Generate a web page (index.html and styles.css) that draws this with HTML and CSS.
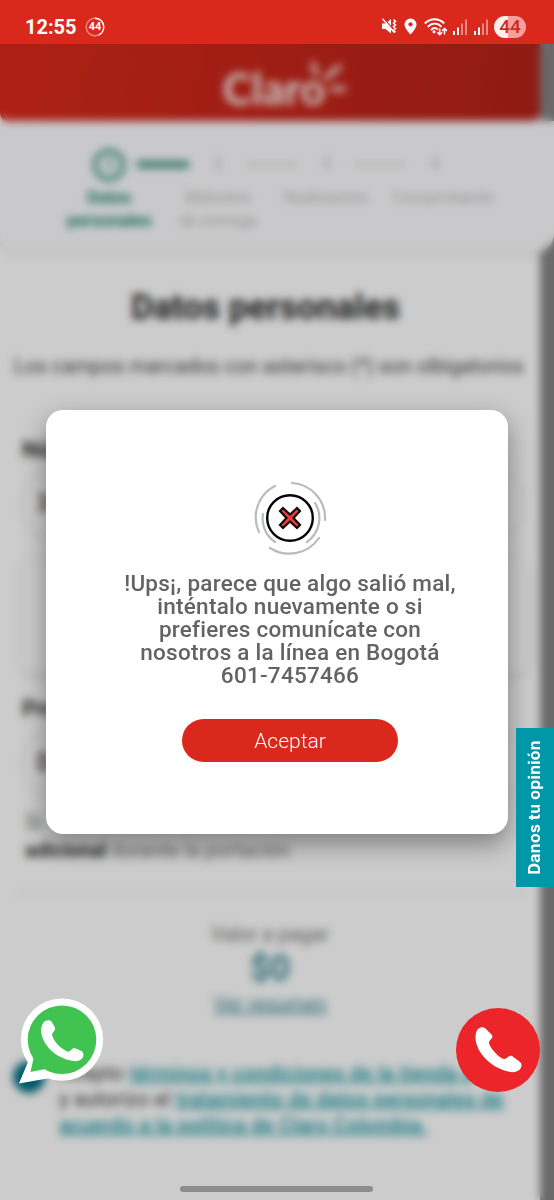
FILE: index.html
```html
<!DOCTYPE html>
<html lang="es">
<head>
<meta charset="utf-8">
<title>Claro - Datos personales</title>
<link rel="stylesheet" href="styles.css">
</head>
<body>
<div class="phone">
  <div class="statusbar">
    <span class="clock">12:55</span>
    <span class="ring">
      <svg width="20" height="20" viewBox="0 0 20 20" fill="none" stroke="#fff" stroke-width="1.4"><circle cx="10" cy="10" r="8.8" opacity=".45"/><path d="M10 1.2a8.8 8.8 0 0 1 3.8 16.7"/></svg>
      <b>44</b>
    </span>
    <div class="status-icons">
      <svg width="17" height="17" viewBox="0 0 17 17"><path d="M1 5.5h3.500L10 1v14.500l-5.500-4.500H1z" fill="#fff"/><path d="M2.800.5l11 13" stroke="#da291c" stroke-width="1.300"/><path d="M1.500.8l12 14M12.500 1.500l2 1.800-2 1.800 2 1.800-2 1.800 2 1.800-2 1.800 2 1.800" stroke="#fff" stroke-width="1.500" fill="none"/></svg>
      <svg class="pin" width="13" height="17" viewBox="0 0 13 17"><path d="M6.500.5a6 6 0 0 0-6 6c0 4.200 6 10 6 10s6-5.800 6-10a6 6 0 0 0-6-6z" fill="#fff"/><circle cx="6.500" cy="6.300" r="2.100" fill="#da291c"/></svg>
      <svg class="wifi" width="24" height="18" viewBox="0 0 24 18" fill="none" stroke="#fff" stroke-width="1.900"><path d="M.8 5.500c5.500-5.700 14.200-5.700 19.400 0M3.800 8.800c4-4.200 10-4.200 13.700 0M7 12c2.200-2.300 5-2.300 7-.4"/><circle cx="10" cy="13.800" r="1.500" fill="#fff" stroke="none"/><path d="M15.700 10.500v6M13.300 14.200l2.400 2.400 2.400-2.400M20.500 16.500v-6M18.100 12.900l2.400-2.400 2.400 2.400" stroke-width="1.500"/></svg>
      <svg class="bars" width="15" height="16" viewBox="0 0 15 16" fill="#fff"><path d="M0 12h2v4H0zM4 8.500h2V16H4z"/><path d="M8 4.500h2V16H8zM12 .5h2V16h-2z" opacity=".45"/></svg>
      <svg class="bars" width="15" height="16" viewBox="0 0 15 16" fill="#fff"><path d="M0 12h2v4H0zM4 8.500h2V16H4z"/><path d="M8 4.500h2V16H8zM12 .5h2V16h-2z" opacity=".45"/></svg>
      <span class="battery">44</span>
    </div>
  </div>

  <div class="viewport">
    <div class="page">
      <header class="brand">
        <span class="brand-name">Claro</span>
        <svg class="rays" width="40" height="42" viewBox="0 0 40 42" stroke="#fff" stroke-width="4.500" stroke-linecap="round"><path d="M4 4l3 10M17 18L30 7M23 29h12"/></svg>
      </header>
      <div class="stepper">
        <div class="step active"><span class="dot">1</span><p>Datos<br>personales</p></div>
        <div class="step"><span class="dot">2</span><p>Métodos<br>de entrega</p></div>
        <div class="step"><span class="dot">3</span><p>Realización</p></div>
        <div class="step last"><span class="dot">4</span><p>Comprobante</p></div>
      </div>
      <main class="content">
        <h1>Datos personales</h1>
        <p class="hint">Los campos marcados con asterisco (*) son olbigatorios</p>
        <div class="form">
          <label>Número</label>
          <div class="field">3</div>
          <div class="card"></div>
          <label>Producto</label>
          <div class="field">D</div>
          <p class="note">Si<br><b>adicional</b> durante la portación</p>
        </div>
        <div class="summary">
          <p class="caption">Valor a pagar</p>
          <p class="price">$0</p>
          <a class="detail">Ver resumen</a>
        </div>
        <div class="terms">
          <span class="check"></span>
          <p>Acepto <a>términos y condiciones de la tienda v</a><br>y autorizo el <a>tratamiento de datos personales de</a><br><a>acuerdo a la política de Claro Colombia.</a></p>
        </div>
      </main>
    </div>
    <div class="scrim"></div>

    <div class="dialog">
      <svg width="76" height="76" viewBox="-38 -38 76 76" fill="none">
        <g stroke="#b7babf" stroke-width="2.200" stroke-linecap="round"><path d="M2-35A35 35 0 0 1 35 2M-15-32A35 35 0 0 0-31 14M-20 30A36 36 0 0 0 29 20M25-15A29 29 0 0 1 17 24M-27-4A28 28 0 0 0-15 24"/></g>
        <circle r="22.800" stroke="#050505" stroke-width="2.400" fill="#fff"/>
        <path d="M-7-10L0-3.500 7-10 10-7 3.500 0 10 7 7 10 0 3.500-7 10-10 7-3.500 0-10-7z" fill="#e93d39" stroke="#160b0b" stroke-width="2.200"/>
      </svg>
      <p class="message">!Ups¡, parece que algo salió mal,<br>inténtalo nuevamente o si<br>prefieres comunícate con<br>nosotros a la línea en Bogotá<br>601-7457466</p>
      <button class="accept">Aceptar</button>
    </div>

    <div class="feedback"><span>Danos tu opinión</span></div>
    <svg class="whatsapp" width="88" height="88" viewBox="0 0 88 88"><path d="M1 86.500L12 60 32 81z" fill="#fff"/><circle cx="44" cy="42.600" r="41.200" fill="#fff"/><path d="M12.500 75L16.500 57 30 71.500z" fill="#40c351"/><circle cx="44" cy="42.700" r="34.300" fill="#40c351"/><path d="M25.500 25.500c2-2.500 6-3 8-1l3.500 6c1 3-3 5-3 7.500 2 7 9 14 15.500 16.500 3 1 4-3.500 7-3.500l7 3c2.500 2 2.500 4.500 1 7-3 3.500-8 4-14 2C35 59 24 46 23 34c0-3 1-6.500 2.500-8.500z" fill="#fff"/></svg>
    <div class="call"><svg width="50" height="50" viewBox="0 0 50 50"><path d="M5 4c3-2.500 6-2 8 0l6 6c2 3-3 5-3 7.500 0 4.500 10 15.500 15 16.500 3 0 5-4.500 8-3l7.500 5.500c2.500 2 2.500 4.500 1 7-3 4-8.500 4.500-14.500 2.500C17 41.500 3 27 2.500 13c0-4 .5-7 2.500-9z" fill="#fff"/></svg></div>
    <div class="home-bar"></div>
  </div>
</div>
</body>
</html>
```
FILE: styles.css
```css
* { box-sizing: border-box; }
body { margin: 0; font-family: Roboto, "Liberation Sans", sans-serif; }
p, h1 { margin: 0; }
.phone { width: 554px; height: 1200px; overflow: hidden; display: flex; flex-direction: column; }

.statusbar { height: 44px; flex: none; background: #da291c; color: #fff; display: flex; align-items: center; padding: 9px 28px 0 25px; }
.clock { font-size: 20px; font-weight: 700; line-height: 24px; width: 60px; }
.ring { position: relative; width: 20px; height: 20px; }
.ring svg { display: block; }
.ring b { position: absolute; inset: 0; font-size: 11px; line-height: 20px; text-align: center; }
.status-icons { margin-left: auto; display: flex; align-items: center; }
.pin { margin-left: 6px; }
.wifi { margin-left: 7px; }
.bars { margin-left: 5px; }
.bars + .bars { margin-left: 6px; }
.battery { width: 32px; height: 22px; margin-left: 5px; border-radius: 11px; background: linear-gradient(90deg, #fff0ee 44%, #f5a09a 44%); color: #ca2b20; font-size: 19px; font-weight: 500; line-height: 22px; text-align: center; }

.viewport { position: relative; flex: 1; overflow: hidden; }
.page { height: 1156px; padding-right: 14px; background: linear-gradient(90deg, #fff 540px, #858585 540px); }
.scrim { position: absolute; inset: 0; background: rgba(0, 0, 0, .2); backdrop-filter: blur(4px); }

.brand { height: 77px; border-radius: 0 0 8px 8px; background: linear-gradient(100deg, #da291c, #b32218); position: relative; padding: 21px 0 0 223px; }
.brand-name { color: #fff; font-family: Lato, sans-serif; font-weight: 700; font-size: 43px; line-height: 48px; letter-spacing: .3px; }
.rays { position: absolute; left: 309px; top: 16px; }

.stepper { height: 132px; margin-right: -14px; background: #fcfcfe; border-radius: 0 0 20px 20px; box-shadow: 0 2px 5px rgba(0, 0, 0, .13); display: grid; grid-template-columns: repeat(4, 108.500px); padding: 28px 0 0 55px; }
.step { position: relative; text-align: center; font-size: 16.700px; line-height: 23px; color: #bcbcbc; white-space: nowrap; }
.step p { display: flow-root; margin: 5px -8px 0; }
.step.last p { margin: 5px -16px 0 0; }
.dot { display: block; width: 32px; height: 32px; margin: 0 auto; font-size: 16px; line-height: 30px; }
.step:not(:last-child)::after { content: ""; position: absolute; left: 82px; top: 14px; width: 52px; height: 3px; background: #d8d8d5; }
.step.active { color: #148564; font-weight: 700; font-size: 17px; }
.step.active .dot { border: 4px solid #288c73; border-radius: 50%; line-height: 24px; font-size: 15px; }
.step.active::after { height: 7px; top: 12px; background: #429580; }

.content { padding: 33px 14px 0; color: #333; }
h1 { font-size: 34.500px; line-height: 42px; text-align: center; padding-right: 9px; color: #252525; }
.hint { font-size: 20px; line-height: 28px; margin-top: 24px; white-space: nowrap; color: #444; letter-spacing: .1px; }
.form { margin-top: 56px; padding: 0 2px 0 8px; border-bottom: 1px solid #ddd; height: 458px; }
.form label { display: block; font-size: 22px; font-weight: 700; line-height: 28px; }
.field { height: 62px; margin-top: 10px; padding-left: 14px; border: 1.500px solid #d5d5d5; border-radius: 24px; font-size: 23px; font-weight: 500; line-height: 58px; }
.card { height: 116px; margin: 22px -6px 21px -3px; border-radius: 16px; border: 1px solid #eee; box-shadow: 0 2px 6px rgba(0, 0, 0, .13); }
.note { margin-top: 13px; padding-left: 3px; font-size: 20px; line-height: 28px; color: #777; }
.note b { color: #2c2c2c; }
.summary { text-align: center; padding-top: 28px; }
.caption { font-size: 20px; line-height: 24px; color: #777; }
.price { font-size: 35px; font-weight: 500; line-height: 42px; color: #257c8a; margin-top: 2px; }
.detail { display: block; font-size: 20px; line-height: 28px; color: #3e8c99; text-decoration: underline; }
.terms { position: relative; margin-top: 42px; padding-left: 45px; font-size: 20px; line-height: 26px; white-space: nowrap; letter-spacing: .33px; }
.terms a { color: #169aa5; text-decoration: underline; font-weight: 500; }
.check { position: absolute; left: -1px; top: 1px; width: 32px; height: 32px; border-radius: 50%; background: #006f83; }

.dialog { position: absolute; left: 46px; top: 366px; width: 462px; height: 424px; padding: 70px 0 0 26px; border-radius: 17px; background: #fff; box-shadow: 0 10px 26px rgba(0, 0, 0, .38); display: flex; flex-direction: column; align-items: center; }
.message { margin-top: 16px; font-size: 22.500px; font-weight: 500; line-height: 23px; letter-spacing: .25px; text-align: center; color: #636363; white-space: nowrap; }
.accept { width: 216px; height: 43px; margin-top: 32px; border: 0; border-radius: 22px; background: #da291c; color: #fff; font: 300 21px/43px Roboto, sans-serif; padding: 1px 0 0; }
.feedback { position: absolute; left: 516px; top: 684px; width: 38px; height: 159px; background: #0097a9; display: flex; align-items: center; justify-content: center; }
.feedback span { writing-mode: vertical-rl; transform: rotate(180deg); color: #fff; font: 700 15.800px/20px Inter, sans-serif; letter-spacing: .3px; white-space: nowrap; }
.whatsapp { position: absolute; left: 18px; top: 953px; }
.call { position: absolute; left: 456px; top: 964px; width: 84px; height: 84px; border-radius: 50%; background: #eb2529; display: flex; align-items: center; justify-content: center; }
.home-bar { position: absolute; left: 180px; top: 1142px; width: 193px; height: 6px; border-radius: 3px; background: #8d8d8d; }
```
